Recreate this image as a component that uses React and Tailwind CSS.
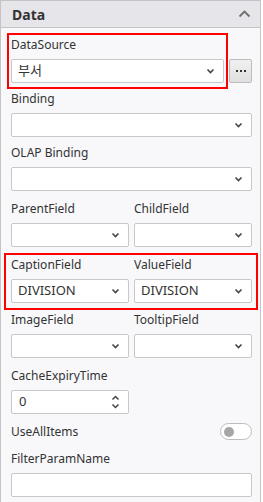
function Caret() {
  return (
    <svg width="9" height="6" viewBox="0 0 9 6" className="shrink-0">
      <path d="M1.5 1.5l3 3 3-3" fill="none" stroke="#444" strokeWidth="1.6" />
    </svg>
  );
}

function Label({ children }) {
  return <div className="text-[12px] leading-[18px] text-[#333] mb-[5px] whitespace-nowrap">{children}</div>;
}

function Select({ value, className = "" }) {
  return (
    <div className={`h-[24px] bg-white border border-[#c8c8c8] rounded-[2px] flex items-center pl-[6px] pr-[8px] ${className}`}>
      <span className="flex-1 text-[13px] text-[#333] truncate">{value}</span>
      <Caret />
    </div>
  );
}

function Field({ label, value, className = "" }) {
  return (
    <div className={className}>
      <Label>{label}</Label>
      <Select value={value} />
    </div>
  );
}

export default function App() {
  return (
    <div className="w-[261px] bg-white" style={{ fontFamily: '"Noto Sans", "Noto Sans CJK KR", sans-serif' }}>
      <div className="border border-[#c4c4c4] bg-[#f8f8fa]">
        <div className="h-[27px] bg-[#e6e6ea] border-b border-[#c4c4c4] flex items-center pl-[11px] pr-[9px]">
          <span className="flex-1 text-[14px] font-bold text-[#333]">Data</span>
          <svg width="13" height="8" viewBox="0 0 13 8">
            <path d="M1.5 6.5l5-5 5 5" fill="none" stroke="#6e6e6e" strokeWidth="1.8" />
          </svg>
        </div>

        <div className="pl-[10px] pr-[8px] pt-[8px] pb-[7px]">
          {/* DataSource */}
          <div className="relative">
            <Label>DataSource</Label>
            <div className="flex gap-[5px]">
              <Select value="부서" className="flex-1" />
              <button className="w-[23px] h-[24px] border border-[#bdbdbd] rounded-[2px] bg-gradient-to-b from-[#f0f0f0] to-[#e0e0e0] flex items-center justify-center gap-[2px]">
                <span className="w-[2px] h-[2px] bg-[#333]" />
                <span className="w-[2px] h-[2px] bg-[#333]" />
                <span className="w-[2px] h-[2px] bg-[#333]" />
              </button>
            </div>
            <div className="absolute -top-[3px] -bottom-[6px] -left-[4px] right-[24px] border-2 border-[#ff0000] pointer-events-none" />
          </div>

          <Field label="Binding" className="mt-[7px]" />
          <Field label="OLAP Binding" className="mt-[7px]" />

          <div className="grid grid-cols-2 gap-[5px] mt-[9px]">
            <Field label="ParentField" />
            <Field label="ChildField" />
          </div>

          <div className="relative mt-[9px]">
            <div className="grid grid-cols-2 gap-[5px]">
              <Field label="CaptionField" value="DIVISION" />
              <Field label="ValueField" value="DIVISION" />
            </div>
            <div className="absolute -top-[3px] -bottom-[7px] -left-[7px] -right-[6px] border-2 border-[#ff0000] pointer-events-none" />
          </div>

          <div className="grid grid-cols-2 gap-[5px] mt-[8px]">
            <Field label="ImageField" />
            <Field label="TooltipField" />
          </div>

          <div className="grid grid-cols-2 gap-[5px] mt-[9px]">
            <div>
              <Label>CacheExpiryTime</Label>
              <div className="h-[24px] bg-white border border-[#c8c8c8] rounded-[2px] flex items-center pl-[7px] pr-[8px]">
                <span className="flex-1 text-[13px] text-[#333]">0</span>
                <div className="flex flex-col gap-[2px]">
                  <svg width="9" height="6" viewBox="0 0 9 6">
                    <path d="M1.5 4.5l3-3 3 3" fill="none" stroke="#444" strokeWidth="1.5" />
                  </svg>
                  <svg width="9" height="6" viewBox="0 0 9 6">
                    <path d="M1.5 1.5l3 3 3-3" fill="none" stroke="#444" strokeWidth="1.5" />
                  </svg>
                </div>
              </div>
            </div>
          </div>

          <div className="flex items-center mt-[9px] h-[17px]">
            <span className="flex-1 text-[12px] text-[#333]">UseAllItems</span>
            <div className="w-[32px] h-[17px] rounded-full border border-[#bdbdbd] bg-white flex items-center pl-[3px]">
              <div className="w-[10px] h-[10px] rounded-full bg-[#a6a6a6]" />
            </div>
          </div>

          <div className="mt-[10px]">
            <Label>FilterParamName</Label>
            <div className="h-[24px] bg-white border border-[#c8c8c8] rounded-[2px]" />
          </div>
        </div>
      </div>
    </div>
  );
}
